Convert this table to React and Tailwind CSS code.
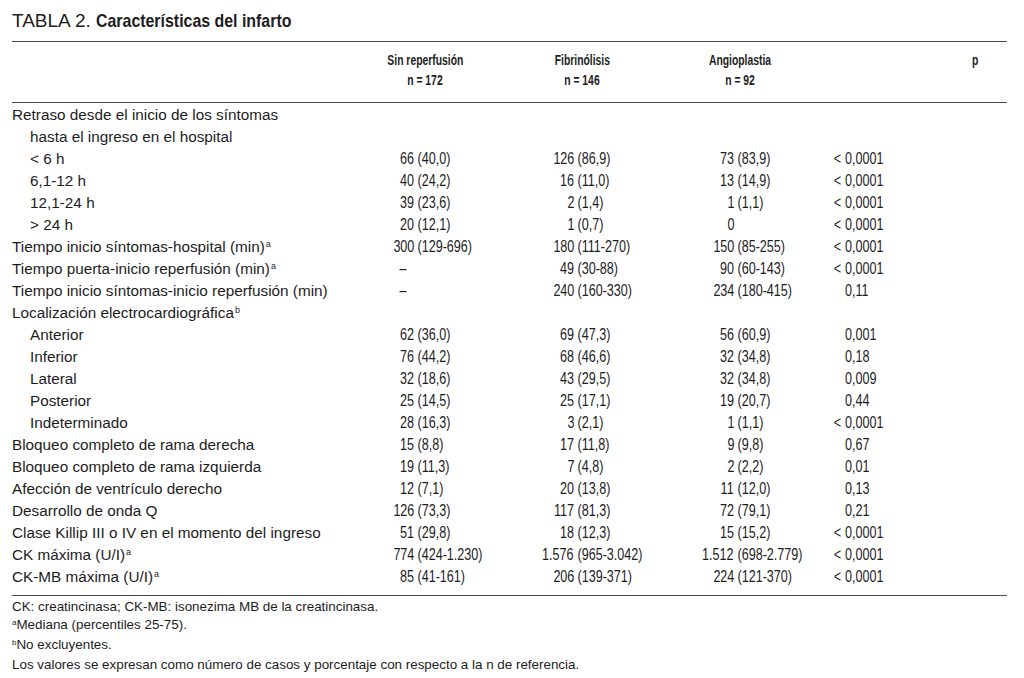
import React from "react";

const sans = "font-['Liberation_Sans',Arial,sans-serif]";

const rows = [
  { label: "Retraso desde el inicio de los síntomas" },
  { label: "hasta el ingreso en el hospital", indent: true },
  { label: "< 6 h", indent: true, v: ["66 (40,0)", "126 (86,9)", "73 (83,9)"], p: "< 0,0001" },
  { label: "6,1-12 h", indent: true, v: ["40 (24,2)", "16 (11,0)", "13 (14,9)"], p: "< 0,0001" },
  { label: "12,1-24 h", indent: true, v: ["39 (23,6)", "2 (1,4)", "1 (1,1)"], p: "< 0,0001" },
  { label: "> 24 h", indent: true, v: ["20 (12,1)", "1 (0,7)", "0"], p: "< 0,0001" },
  { label: "Tiempo inicio síntomas-hospital (min)", sup: "a", v: ["300 (129-696)", "180 (111-270)", "150 (85-255)"], p: "< 0,0001" },
  { label: "Tiempo puerta-inicio reperfusión (min)", sup: "a", v: ["–", "49 (30-88)", "90 (60-143)"], p: "< 0,0001" },
  { label: "Tiempo inicio síntomas-inicio reperfusión (min)", v: ["–", "240 (160-330)", "234 (180-415)"], p: "0,11" },
  { label: "Localización electrocardiográfica", sup: "b" },
  { label: "Anterior", indent: true, v: ["62 (36,0)", "69 (47,3)", "56 (60,9)"], p: "0,001" },
  { label: "Inferior", indent: true, v: ["76 (44,2)", "68 (46,6)", "32 (34,8)"], p: "0,18" },
  { label: "Lateral", indent: true, v: ["32 (18,6)", "43 (29,5)", "32 (34,8)"], p: "0,009" },
  { label: "Posterior", indent: true, v: ["25 (14,5)", "25 (17,1)", "19 (20,7)"], p: "0,44" },
  { label: "Indeterminado", indent: true, v: ["28 (16,3)", "3 (2,1)", "1 (1,1)"], p: "< 0,0001" },
  { label: "Bloqueo completo de rama derecha", v: ["15 (8,8)", "17 (11,8)", "9 (9,8)"], p: "0,67" },
  { label: "Bloqueo completo de rama izquierda", v: ["19 (11,3)", "7 (4,8)", "2 (2,2)"], p: "0,01" },
  { label: "Afección de ventrículo derecho", v: ["12 (7,1)", "20 (13,8)", "11 (12,0)"], p: "0,13" },
  { label: "Desarrollo de onda Q", v: ["126 (73,3)", "117 (81,3)", "72 (79,1)"], p: "0,21" },
  { label: "Clase Killip III o IV en el momento del ingreso", v: ["51 (29,8)", "18 (12,3)", "15 (15,2)"], p: "< 0,0001" },
  { label: "CK máxima (U/I)", sup: "a", v: ["774 (424-1.230)", "1.576 (965-3.042)", "1.512 (698-2.779)"], p: "< 0,0001" },
  { label: "CK-MB máxima (U/I)", sup: "a", v: ["85 (41-161)", "206 (139-371)", "224 (121-370)"], p: "< 0,0001" },
];

const Sup = ({ children }) => (
  <span className="relative -top-[5px] ml-px text-[9px]">{children}</span>
);

// no hay fuente estrecha: se comprime Liberation Sans en horizontal
const Narrow = ({ children, origin = "origin-left" }) => (
  <span className={`inline-block whitespace-pre scale-x-[0.74] ${origin}`}>{children}</span>
);

// parte entera alineada a la derecha, el paréntesis a continuación
const Value = ({ text, width }) => {
  const i = text.indexOf(" ");
  const num = i < 0 ? text : text.slice(0, i);
  const rest = i < 0 ? "" : text.slice(i);
  return (
    <div className={`flex shrink-0 ${width}`}>
      <span className={`w-[48px] shrink-0 text-right ${num === "–" ? "pr-[8px]" : ""}`}>
        <Narrow origin="origin-right">{num}</Narrow>
      </span>
      {rest && <Narrow>{rest}</Narrow>}
    </div>
  );
};

const PValue = ({ text }) => {
  const lt = text.startsWith("< ");
  return (
    <div className="flex shrink-0">
      <span className="w-[33px] shrink-0 text-right">
        {lt && <Narrow origin="origin-right">{"< "}</Narrow>}
      </span>
      <Narrow>{lt ? text.slice(2) : text}</Narrow>
    </div>
  );
};

const Head = ({ children }) => (
  <span className="inline-block scale-x-[0.74] origin-center">{children}</span>
);

export default function App() {
  return (
    <div className="min-h-screen w-[1024px] bg-white text-[#1d1d1d]">
      <div className="w-[995px] pl-[12px] box-content">
        {/* Titulo */}
        <div className="flex h-[41px] items-center pt-[1px]">
          <span className={`${sans} text-[19px]`}>TABLA 2.</span>
          <span
            className={`${sans} ml-[5px] inline-block origin-left scale-x-[0.86] text-[18.5px] font-bold`}
          >
            Características del infarto
          </span>
        </div>
        <div className="border-t border-[#4a4a4a]" />

        {/* Cabecera */}
        <div className={`${sans} flex h-[60px] pt-[8px] text-[14px] font-bold leading-[20px]`}>
          <div className="w-[333px] shrink-0" />
          <div className="w-[160px] shrink-0 text-center">
            <div><Head>Sin reperfusión</Head></div>
            <div><Head>n = 172</Head></div>
          </div>
          <div className="w-[154px] shrink-0 text-center">
            <div><Head>Fibrinólisis</Head></div>
            <div><Head>n = 146</Head></div>
          </div>
          <div className="w-[162px] shrink-0 text-center">
            <div><Head>Angioplastia</Head></div>
            <div><Head>n = 92</Head></div>
          </div>
          <div className="ml-[134px] w-[40px] shrink-0 text-center">
            <Head>p</Head>
          </div>
        </div>
        <div className="border-t border-[#4a4a4a]" />

        {/* Filas */}
        <div className="pt-[1px] pb-[7px]">
          {rows.map((r, idx) => (
            <div key={idx} className={`${sans} flex h-[22px] items-center`}>
              <div
                className={`w-[354px] shrink-0 text-[15.3px] ${r.indent ? "pl-[18px]" : ""}`}
              >
                {r.label}
                {r.sup && <Sup>{r.sup}</Sup>}
              </div>
              {r.v && (
                <div className="flex text-[17px]">
                  <Value text={r.v[0]} width="w-[160px]" />
                  <Value text={r.v[1]} width="w-[160px]" />
                  <Value text={r.v[2]} width="w-[126px]" />
                  <PValue text={r.p} />
                </div>
              )}
            </div>
          ))}
        </div>
        <div className="border-t border-[#4a4a4a]" />

        {/* Notas */}
        <div className={`${sans} pt-[2px] text-[13.4px] leading-[18px]`}>
          <div>CK: creatincinasa; CK-MB: isonezima MB de la creatincinasa.</div>
          <div>
            <span className="relative -top-[4px] text-[8px]">a</span>Mediana (percentiles 25-75).
          </div>
          <div>
            <span className="relative -top-[4px] text-[8px]">b</span>No excluyentes.
          </div>
          <div>
            Los valores se expresan como número de casos y porcentaje con respecto a la n de
            referencia.
          </div>
        </div>
      </div>
    </div>
  );
}
